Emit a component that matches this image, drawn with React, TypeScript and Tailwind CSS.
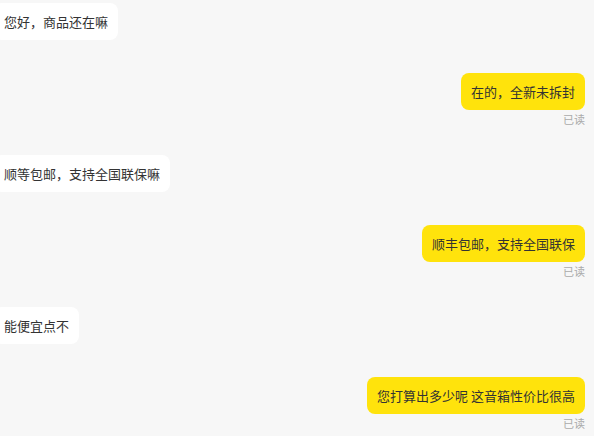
import React from "react";

type Msg = { side: "left" | "right"; text: string };

const msgs: Msg[] = [
  { side: "left", text: "您好，商品还在嘛" },
  { side: "right", text: "在的，全新未拆封" },
  { side: "left", text: "顺等包邮，支持全国联保嘛" },
  { side: "right", text: "顺丰包邮，支持全国联保" },
  { side: "left", text: "能便宜点不" },
  { side: "right", text: "您打算出多少呢 这音箱性价比很高" },
];

export default function App() {
  return (
    <div
      className="w-[594px] h-[436px] overflow-hidden bg-[#f7f7f7] pt-[3px] pr-[9px] pl-0 flex flex-col"
      style={{ fontFamily: '"Noto Sans CJK SC", "Noto Sans", sans-serif' }}
    >
      {msgs.map((m, i) =>
        m.side === "left" ? (
          <div key={i} className="flex justify-start ml-[-6px] mb-[33px]">
            <div className="bg-white rounded-[8px] px-[10px] py-[9px] text-[13px] leading-[19px] text-[#333333] whitespace-nowrap">
              {m.text}
            </div>
          </div>
        ) : (
          <div key={i} className="flex flex-col items-end mb-[29px]">
            <div className="bg-[#ffe30c] rounded-[8px] px-[10px] py-[9px] text-[13px] leading-[19px] text-[#333333] whitespace-nowrap">
              {m.text}
            </div>
            <div className="mt-[3px] text-[11px] leading-[13px] text-[#aaaaaa]">已读</div>
          </div>
        )
      )}
    </div>
  );
}
